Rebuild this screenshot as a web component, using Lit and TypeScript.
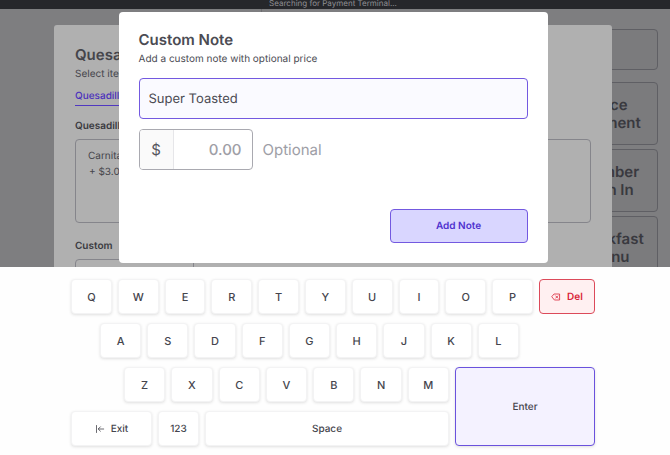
import { LitElement, html, css, svg } from "lit";
import { customElement, property, state } from "lit/decorators.js";

const exitIcon = svg`<svg class="icon" viewBox="0 0 10 10" aria-hidden="true"><path d="M1.5 1.5v7M8.7 5H3.4M5.4 2.8 3.2 5l2.2 2.2" /></svg>`;
const deleteIcon = svg`<svg class="icon" viewBox="0 0 10 10" aria-hidden="true"><path d="M3.4 2h5.2v6H3.4L1 5z" /><path d="m4.7 3.9 2.2 2.2m0-2.2L4.7 6.1" /></svg>`;

@customElement("status-bar")
class StatusBar extends LitElement {
  static styles = css`
    :host {
      display: flex;
      align-items: flex-end;
      justify-content: center;
      height: 9px;
      padding-right: 4px;
      overflow: hidden;
      background: #26272b;
      color: #8f8f93;
      font-size: 8px;
      line-height: 12px;
    }
  `;
  render() {
    return html`<span>Searching for Payment Terminal...</span>`;
  }
}

@customElement("register-page")
class RegisterPage extends LitElement {
  static styles = css`
    :host {
      display: flex;
      flex-direction: column;
      background: #7e7e80;
      color: #39393f;
      overflow: hidden;
    }
    .columns {
      flex: 1;
      display: flex;
      min-height: 0;
    }
    .ticket {
      width: 39%;
      border-right: 1px solid #6c6c70;
    }
    .tiles {
      margin: 20px 12px 0 auto;
      width: 98px;
      display: flex;
      flex-direction: column;
      gap: 4px;
    }
    .tile {
      box-sizing: border-box;
      flex: none;
      height: 63px;
      padding: 0 8px;
      border: 1px solid #5f5f64;
      border-radius: 4px;
      background: #7b7b7d;
      color: inherit;
      font: 600 15px/18px Inter, sans-serif;
      text-rendering: geometricPrecision;
    }
    .search {
      height: 41px;
      margin-bottom: 8px;
    }
  `;
  render() {
    return html`
      <status-bar></status-bar>
      <div class="columns">
        <div class="ticket"></div>
        <div class="tiles">
          <button class="tile search" aria-label="Search"></button>
          <button class="tile">Price Payment</button>
          <button class="tile">Member Sign In</button>
          <button class="tile">Breakfast Menu</button>
        </div>
      </div>
    `;
  }
}

@customElement("item-dialog")
class ItemDialog extends LitElement {
  static styles = css`
    :host {
      display: block;
      box-sizing: border-box;
      padding: 20px 21px;
      border-radius: 3px 3px 0 0;
      background: #b0b0b0;
      color: #45454b;
      font-size: 10px;
      line-height: 18px;
    }
    .title {
      margin: 0;
      font-size: 15px;
      font-weight: 600;
      line-height: 20px;
    }
    .hint {
      margin: 0 0 4px;
    }
    .tab {
      display: inline-block;
      border-bottom: 1px solid #5038c0;
      color: #4a2fbd;
      font-weight: 500;
      line-height: 17px;
      text-decoration: none;
    }
    .heading {
      margin: 11px 0 4px;
      color: #3a3a40;
      font-size: 10px;
      font-weight: 600;
      line-height: 18px;
    }
    .heading + .group {
      margin-bottom: 14px;
    }
    .group {
      box-sizing: border-box;
      height: 84px;
      padding: 8px 12px;
      border: 1px solid #85858b;
      border-radius: 4px;
      line-height: 16px;
    }
    .price {
      padding-left: 1px;
    }
    .custom {
      width: 119px;
    }
  `;
  render() {
    return html`
      <h2 class="title">Quesadilla</h2>
      <p class="hint">Select items</p>
      <a class="tab" href="#quesadilla">Quesadilla</a>
      <h3 class="heading">Quesadilla</h3>
      <div class="group">
        <div>Carnitas</div>
        <div class="price">+ $3.00</div>
      </div>
      <h3 class="heading">Custom</h3>
      <div class="group custom"></div>
    `;
  }
}

@customElement("note-dialog")
class NoteDialog extends LitElement {
  @property() note = "";

  static styles = css`
    :host {
      display: block;
      box-sizing: border-box;
      padding: 18px 20px 20px;
      border-radius: 4px;
      background: #fff;
      color: #4b4b53;
      font-size: 10px;
    }
    .title {
      margin: 0;
      font-size: 15px;
      font-weight: 600;
      line-height: 20px;
    }
    .hint {
      margin: 0 0 10px;
      line-height: 18px;
    }
    .note,
    .amount {
      box-sizing: border-box;
      height: 41px;
      border-radius: 4px;
    }
    .note {
      display: block;
      width: 100%;
      margin-bottom: 10px;
      padding: 0 9px;
      border: 1px solid #7359e0;
      outline: none;
      background: #fafaff;
      color: inherit;
      font: 13px Inter, sans-serif;
      text-rendering: geometricPrecision;
    }
    .price {
      display: flex;
      align-items: center;
      gap: 10px;
      margin-bottom: 39px;
      color: #9e9ea6;
      font-size: 15px;
    }
    .amount {
      display: flex;
      width: 114px;
      border: 1px solid #a9a9b0;
      overflow: hidden;
    }
    .sign {
      flex: none;
      width: 33px;
      border-right: 1px solid #e6e6e9;
      background: #fafafa;
      color: #55555d;
      line-height: 39px;
      text-align: center;
    }
    .value {
      flex: 1;
      min-width: 0;
      padding: 0 10px;
      border: 0;
      outline: none;
      background: none;
      font: 500 15px Inter, sans-serif;
      text-align: right;
      text-rendering: geometricPrecision;
    }
    .value::placeholder {
      color: #9e9ea6;
    }
    .actions {
      display: flex;
      justify-content: flex-end;
    }
    .add {
      width: 138px;
      height: 34px;
      border: 1px solid #7359e0;
      border-radius: 4px;
      background: #d9d6ff;
      color: #4f32cf;
      font: 600 10px Inter, sans-serif;
      text-rendering: geometricPrecision;
    }
  `;
  render() {
    return html`
      <h1 class="title">Custom Note</h1>
      <p class="hint">Add a custom note with optional price</p>
      <input class="note" aria-label="Note" .value=${this.note} />
      <div class="price">
        <div class="amount">
          <span class="sign">$</span>
          <input class="value" id="price" placeholder="0.00" inputmode="decimal" />
        </div>
        <label for="price">Optional</label>
      </div>
      <div class="actions"><button class="add">Add Note</button></div>
    `;
  }
}

@customElement("touch-keyboard")
class TouchKeyboard extends LitElement {
  static styles = css`
    :host {
      display: flex;
      flex-direction: column;
      gap: 9px;
      padding: 12px 75px 9px 71px;
      background: #fefefe;
    }
    .row {
      display: flex;
      gap: 6px;
    }
    .home {
      padding: 0 76px 0 29px;
    }
    .bottom {
      padding-left: 53px;
    }
    .lower {
      display: flex;
      gap: 6px;
    }
    .stack {
      flex: 1;
      display: flex;
      flex-direction: column;
      gap: 9px;
    }
    .key {
      box-sizing: border-box;
      flex: 1 1 0;
      min-width: 0;
      height: 35px;
      display: flex;
      align-items: center;
      justify-content: center;
      padding: 0;
      border: 1px solid #f3f3f4;
      border-radius: 4px;
      background: #fff;
      box-shadow: 0 1px 3px #0000001f;
      color: #45454d;
      font: 500 10px Inter, sans-serif;
      text-rendering: geometricPrecision;
    }
    .letter {
      font-size: 11px;
    }
    .exit {
      flex: 0 0 81px;
      gap: 6px;
    }
    .digits {
      flex: 0 0 41px;
    }
    .delete {
      flex: 0 0 56px;
      gap: 6px;
      border-color: #dc4a5a;
      background: #fff0f1;
      box-shadow: none;
      color: #d92438;
      font-weight: 600;
    }
    .enter {
      flex: 0 0 140px;
      height: auto;
      border-color: #6a52dd;
      background: #f4f2ff;
    }
    .icon {
      width: 10px;
      height: 10px;
      fill: none;
      stroke: currentColor;
      stroke-width: 0.8;
      stroke-linecap: round;
      stroke-linejoin: round;
    }
  `;

  private keys(letters: string) {
    return [...letters].map((letter) => html`<button class="key letter">${letter}</button>`);
  }

  render() {
    return html`
      <div class="row">
        ${this.keys("QWERTYUIOP")}
        <button class="key delete">${deleteIcon}Del</button>
      </div>
      <div class="row home">${this.keys("ASDFGHJKL")}</div>
      <div class="lower">
        <div class="stack">
          <div class="row bottom">${this.keys("ZXCVBNM")}</div>
          <div class="row">
            <button class="key exit">${exitIcon}Exit</button>
            <button class="key digits">123</button>
            <button class="key">Space</button>
          </div>
        </div>
        <button class="key enter">Enter</button>
      </div>
    `;
  }
}

@customElement("app-root")
class AppRoot extends LitElement {
  @state() private note = "Super Toasted";

  static styles = css`
    :host {
      display: flex;
      flex-direction: column;
      height: 100vh;
      font-family: Inter, sans-serif;
      text-rendering: geometricPrecision;
    }
    .stage {
      flex: 1;
      min-height: 0;
      display: grid;
      grid-template: minmax(0, 1fr) / minmax(0, 1fr);
      overflow: hidden;
    }
    .layer {
      grid-area: 1 / 1;
    }
    .item {
      justify-self: center;
      width: 84%;
      max-width: 558px;
      margin: 25px 4px 0 0;
    }
    .dialog {
      place-self: start center;
      width: 65%;
      max-width: 429px;
      margin: 12px 4px 0 0;
    }
  `;

  render() {
    return html`
      <div class="stage">
        <register-page class="layer"></register-page>
        <item-dialog class="layer item"></item-dialog>
        <note-dialog class="layer dialog" role="dialog" aria-label="Custom Note" .note=${this.note}></note-dialog>
      </div>
      <touch-keyboard></touch-keyboard>
    `;
  }
}
